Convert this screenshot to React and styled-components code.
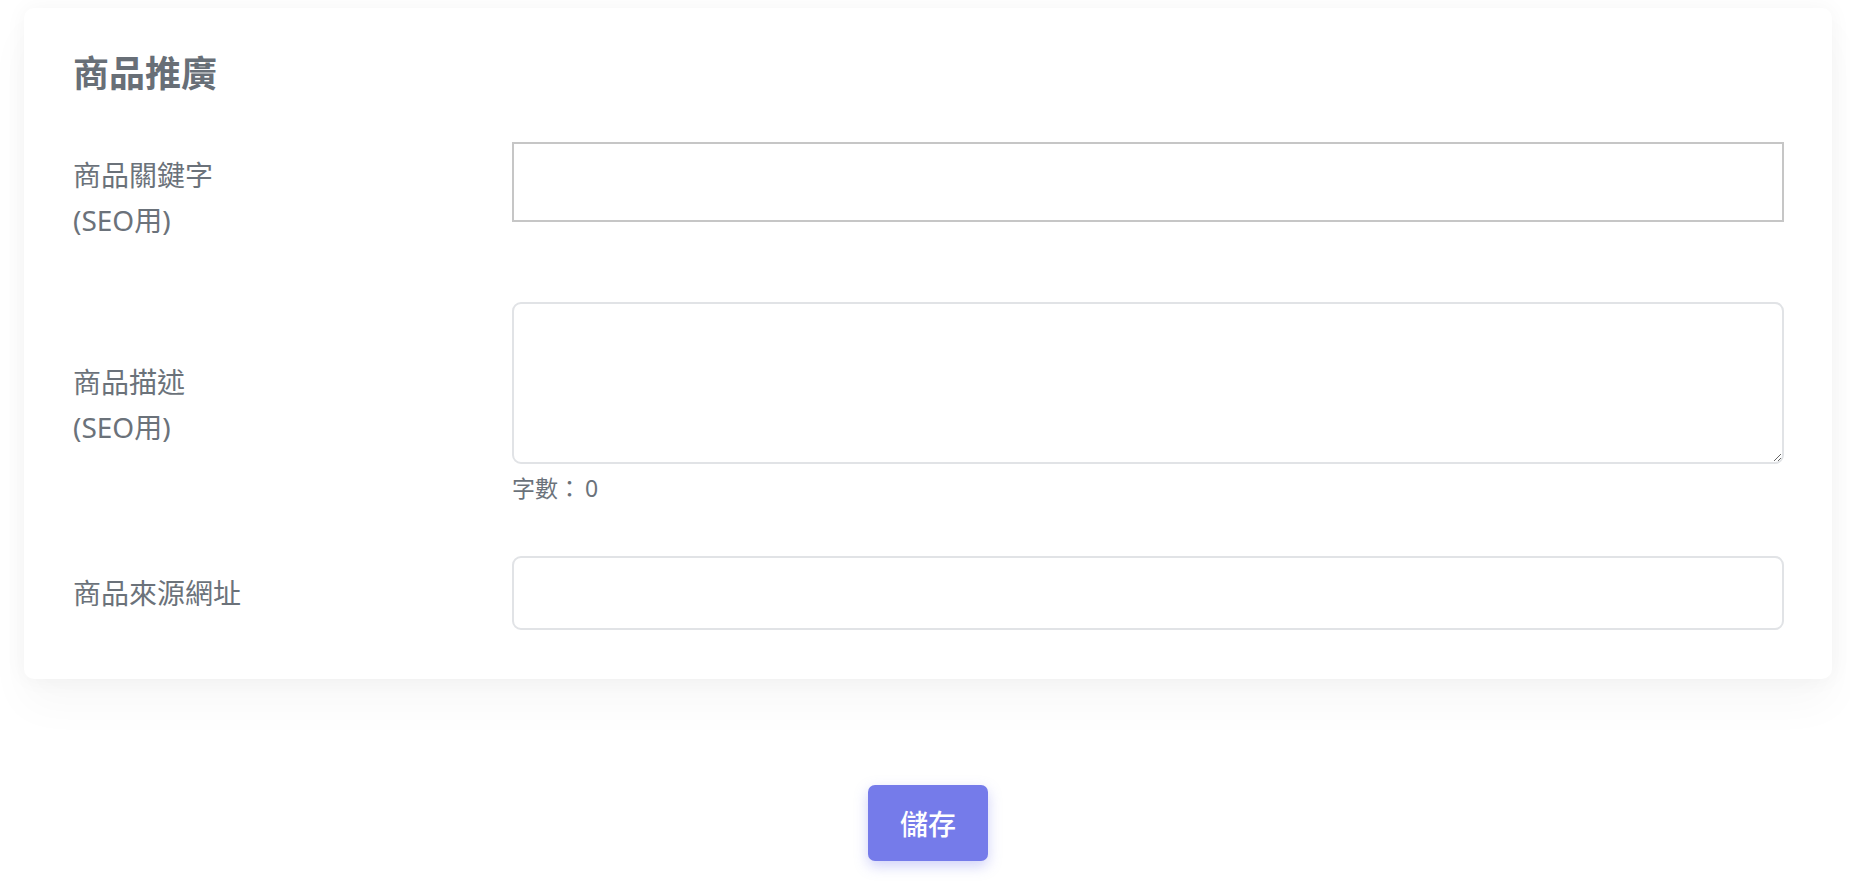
import React, { useState } from "react";
import styled, { createGlobalStyle } from "styled-components";

const GlobalStyle = createGlobalStyle`
  html, body {
    margin: 0;
    padding: 0;
    background: #ffffff;
  }
  body {
    font-family: "Noto Sans", "Noto Sans CJK TC", sans-serif;
    color: #6b727a;
  }
  * {
    box-sizing: border-box;
  }
`;

const Page = styled.div`
  width: 1850px;
  min-height: 894px;
  padding: 8px 18px 0 24px;
  display: flex;
  flex-direction: column;
`;

const Card = styled.section`
  background: #ffffff;
  border-radius: 10px;
  padding: 44px 48px 49px 49px;
  box-shadow: 0 0 22px rgba(0, 0, 0, 0.045), 0 26px 44px rgba(0, 0, 0, 0.03);
`;

const Title = styled.h2`
  margin: 0 0 47px;
  font-size: 36px;
  line-height: 1.2;
  font-weight: 700;
  color: #686f77;
`;

const Rows = styled.div`
  display: flex;
  flex-direction: column;
  gap: 48px;
`;

const Row = styled.div`
  display: flex;
  align-items: center;
`;

const Label = styled.label`
  width: 439px;
  flex-shrink: 0;
  font-size: 28px;
  line-height: 1.62;
  color: #6b727a;
`;

const Field = styled.div`
  flex: 1;
  display: flex;
  flex-direction: column;
  padding-bottom: ${(p) => p.$pad || 0}px;
`;

const TagInput = styled.input`
  width: 100%;
  height: 80px;
  border: 2px solid #c6c6c6;
  border-radius: 0;
  background: #fff;
  outline: none;
  font-size: 26px;
  padding: 0 16px;
`;

const TextInput = styled.input`
  width: 100%;
  height: 74px;
  border: 2px solid #e1e3e6;
  border-radius: 9px;
  background: #fff;
  outline: none;
  font-size: 26px;
  padding: 0 18px;
`;

const TextArea = styled.textarea`
  width: 100%;
  height: 162px;
  border: 2px solid #e1e3e6;
  border-radius: 9px;
  background: #fff;
  outline: none;
  resize: vertical;
  font-family: inherit;
  font-size: 26px;
  padding: 12px 18px;
  display: block;
`;

const Counter = styled.div`
  margin: 6px 0 2px;
  font-size: 23px;
  line-height: 36px;
  color: #6b727a;
`;

const CountValue = styled.span`
  margin-left: 4px;
`;

const Footer = styled.div`
  display: flex;
  justify-content: center;
  padding-top: 106px;
`;

const SaveButton = styled.button`
  width: 120px;
  height: 76px;
  border: none;
  border-radius: 7px;
  background: #757bea;
  color: #ffffff;
  font-family: inherit;
  font-size: 28px;
  font-weight: 500;
  cursor: pointer;
  box-shadow: 0 5px 14px rgba(117, 123, 234, 0.35);
`;

export default function App() {
  const [desc, setDesc] = useState("");

  return (
    <>
      <GlobalStyle />
      <Page>
        <Card>
          <Title>商品推廣</Title>
          <Rows>
            <Row>
              <Label>
                商品關鍵字
                <br />
                (SEO用)
              </Label>
              <Field $pad={32}>
                <TagInput type="text" />
              </Field>
            </Row>
            <Row>
              <Label>
                商品描述
                <br />
                (SEO用)
              </Label>
              <Field>
                <TextArea value={desc} onChange={(e) => setDesc(e.target.value)} />
                <Counter>
                  字數：<CountValue>{desc.length}</CountValue>
                </Counter>
              </Field>
            </Row>
            <Row>
              <Label>商品來源網址</Label>
              <Field>
                <TextInput type="text" />
              </Field>
            </Row>
          </Rows>
        </Card>
        <Footer>
          <SaveButton>儲存</SaveButton>
        </Footer>
      </Page>
    </>
  );
}
